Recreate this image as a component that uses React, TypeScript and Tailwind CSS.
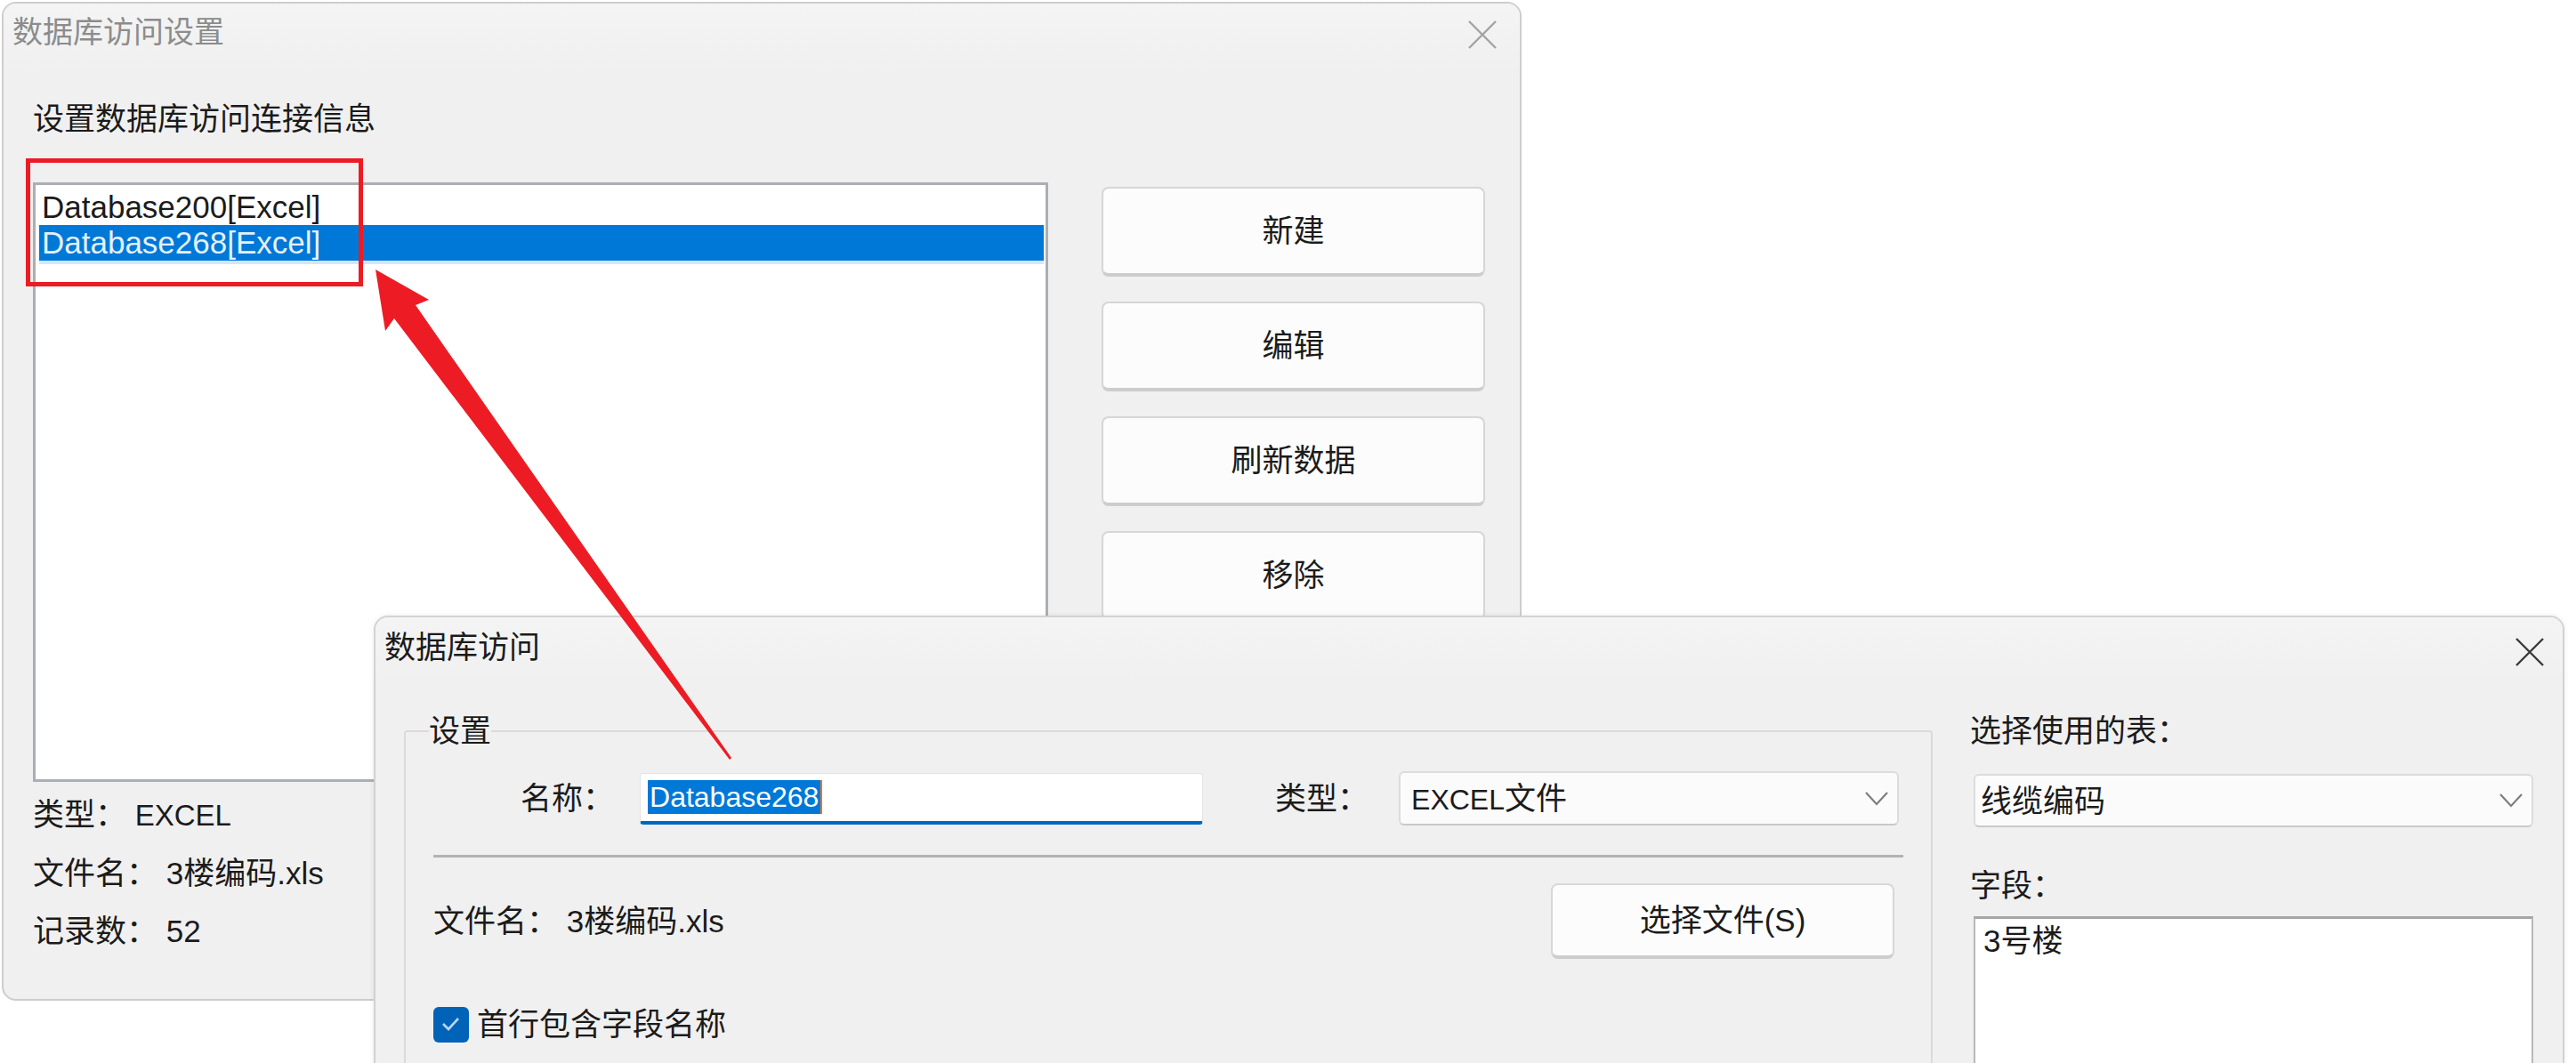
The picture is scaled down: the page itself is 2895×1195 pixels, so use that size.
const font = "font-['Liberation_Sans','Noto_Sans_CJK_SC',sans-serif]"

const CloseIcon = ({ className }: { className: string }) => (
  <svg width="34" height="34" viewBox="0 0 34 34" className={className}>
    <path d="M2 2 L32 32 M32 2 L2 32" stroke="currentColor" strokeWidth="2.4" fill="none" />
  </svg>
)

const Chevron = () => (
  <svg width="26" height="16" viewBox="0 0 26 16" className="text-[#7d7d7d]">
    <path d="M1 1 L13 14 L25 1" fill="none" stroke="currentColor" strokeWidth="2.2" />
  </svg>
)

const sideButtons = ['新建', '编辑', '刷新数据', '移除']

const SettingsWindow = () => (
  <div className="absolute left-[2px] top-[2px] flex h-[1123px] w-[1708px] flex-col overflow-hidden rounded-[16px] border-2 border-[#cdcdcd] bg-[#f0f0f0]">
    <div className="flex h-[76px] shrink-0 items-start justify-between bg-linear-to-b from-[#f4f4f4] to-[#f0f0f0] pl-[10px] pr-[25px]">
      <span className="mt-[15px] text-[34px] leading-none text-[#8c8c8c]">数据库访问设置</span>
      <CloseIcon className="mt-[18px] text-[#a3a3a3]" />
    </div>
    <div className="flex flex-col pl-[33px]">
      <div className="mt-[36px] text-[35px] leading-none">设置数据库访问连接信息</div>
      <div className="mt-[54px] flex items-start gap-[60px]">
        <div className="h-[674px] w-[1141px] border-[3px] border-[#abaeb4] bg-white pl-[4px] pr-[2px] pt-[5px]">
          <div className="h-[40px] pl-[3px] text-[35px] leading-[40px]">Database200[Excel]</div>
          <div className="h-[40px] bg-[#0078d7] pl-[3px] text-[35px] leading-[40px] text-[#e4f1fd] shadow-[0_4px_0_#d2e7fa]">
            Database268[Excel]
          </div>
        </div>
        <div className="mt-[5px] flex w-[431px] flex-col gap-[28px]">
          {sideButtons.map((label) => (
            <button
              key={label}
              className="flex h-[101px] items-center justify-center rounded-[8px] border-2 border-b-4 border-[#d6d6d6] border-b-[#cdcdcd] bg-[#fcfcfc] text-[35px] leading-none"
            >
              {label}
            </button>
          ))}
        </div>
      </div>
      <div className="mt-[4px] flex flex-col text-[35px] leading-[65px]">
        <div>
          类型： <span className="text-[33px]">EXCEL</span>
        </div>
        <div>文件名： 3楼编码.xls</div>
        <div>记录数： 52</div>
      </div>
    </div>
  </div>
)

const AccessWindow = () => (
  <div className="absolute left-[420px] top-[692px] flex h-[620px] w-[2462px] flex-col rounded-t-[16px] border-2 border-[#d2d2d2] bg-[#f0f0f0] shadow-[0_0_6px_rgba(0,0,0,0.08)]">
    <div className="flex h-[74px] shrink-0 items-start justify-between rounded-t-[14px] bg-linear-to-b from-[#f4f4f4] to-[#f0f0f0] pl-[10px] pr-[20px]">
      <span className="mt-[16px] text-[35px] leading-none">数据库访问</span>
      <CloseIcon className="mt-[22px] text-[#3a3a3a]" />
    </div>
    <div className="flex items-start pl-[32px] pt-[36px]">
      <fieldset className="w-[1718px] rounded-[4px] border-2 border-[#dadada] pb-[60px]">
        <legend className="ml-[26px] text-[35px] leading-none">设置</legend>
        <div className="flex flex-col px-[31px]">
          <div className="mt-[28px] flex items-center text-[35px] leading-none">
            <span className="ml-[98px]">名称：</span>
            <div className="ml-[29px] flex h-[58px] w-[633px] items-center rounded-[4px] border border-[#e3e3e3] border-b-4 border-b-[#0067c0] bg-white pl-[8px]">
              <span className="bg-[#0078d7] px-[2px] text-[32px] leading-[38px] text-white">Database268</span>
              <span className="h-[38px] w-[2px] bg-[#e07a2a]" />
            </div>
            <span className="ml-[81px]">类型：</span>
            <div className="ml-[34px] flex h-[61px] w-[562px] items-center justify-between rounded-[6px] border-2 border-[#dcdcdc] border-b-[#c9c9c9] bg-[#fbfbfb] pl-[12px] pr-[10px]">
              <span>
                <span className="text-[32px]">EXCEL</span>文件
              </span>
              <Chevron />
            </div>
          </div>
          <div className="mt-[33px] h-[3px] bg-[#b3b3b3]" />
          <div className="mt-[29px] flex items-center justify-between pr-[10px] text-[35px] leading-none">
            <span>文件名： 3楼编码.xls</span>
            <button className="flex h-[85px] w-[386px] items-center justify-center rounded-[8px] border-2 border-b-4 border-[#d8d8d8] border-b-[#cdcdcd] bg-[#fcfcfc]">
              选择文件(S)
            </button>
          </div>
          <div className="mt-[54px] flex items-center text-[35px] leading-[40px]">
            <div className="flex h-[40px] w-[40px] items-center justify-center rounded-[6px] bg-[#0063b8]">
              <svg width="40" height="40" viewBox="0 0 40 40">
                <path d="M11 19 L17 25 L28 13" fill="none" stroke="#b9d6f2" strokeWidth="2.6" />
              </svg>
            </div>
            <span className="ml-[9px]">首行包含字段名称</span>
          </div>
        </div>
      </fieldset>
      <div className="ml-[42px] flex w-[633px] flex-col text-[35px] leading-none">
        <span>选择使用的表：</span>
        <div className="ml-[4px] mt-[31px] flex h-[60px] w-[629px] items-center justify-between rounded-[6px] border-2 border-[#dcdcdc] border-b-[#c9c9c9] bg-[#fbfbfb] pl-[6px] pr-[10px]">
          <span>线缆编码</span>
          <Chevron />
        </div>
        <span className="mt-[48px]">字段：</span>
        <div className="ml-[4px] mt-[17px] h-[300px] w-[629px] border-2 border-t-[3px] border-[#b8b8b8] border-t-[#a5a5a5] bg-white pl-[9px] pt-[5px]">
          <div className="leading-[40px]">3号楼</div>
        </div>
      </div>
    </div>
  </div>
)

const Annotation = () => (
  <>
    <div className="pointer-events-none absolute left-[29px] top-[178px] h-[144px] w-[379px] border-[5px] border-[#ec1c24]" />
    <svg className="pointer-events-none absolute left-0 top-0" width="2895" height="1195">
      <polygon points="422,303 482,337 467,343 822,852 820,854 443,358 433,372" fill="#ed1c24" />
    </svg>
  </>
)

export default function App() {
  return (
    <div className={`relative h-[1195px] w-[2895px] overflow-hidden bg-white text-[#1b1b1b] ${font}`}>
      <SettingsWindow />
      <AccessWindow />
      <Annotation />
    </div>
  )
}
